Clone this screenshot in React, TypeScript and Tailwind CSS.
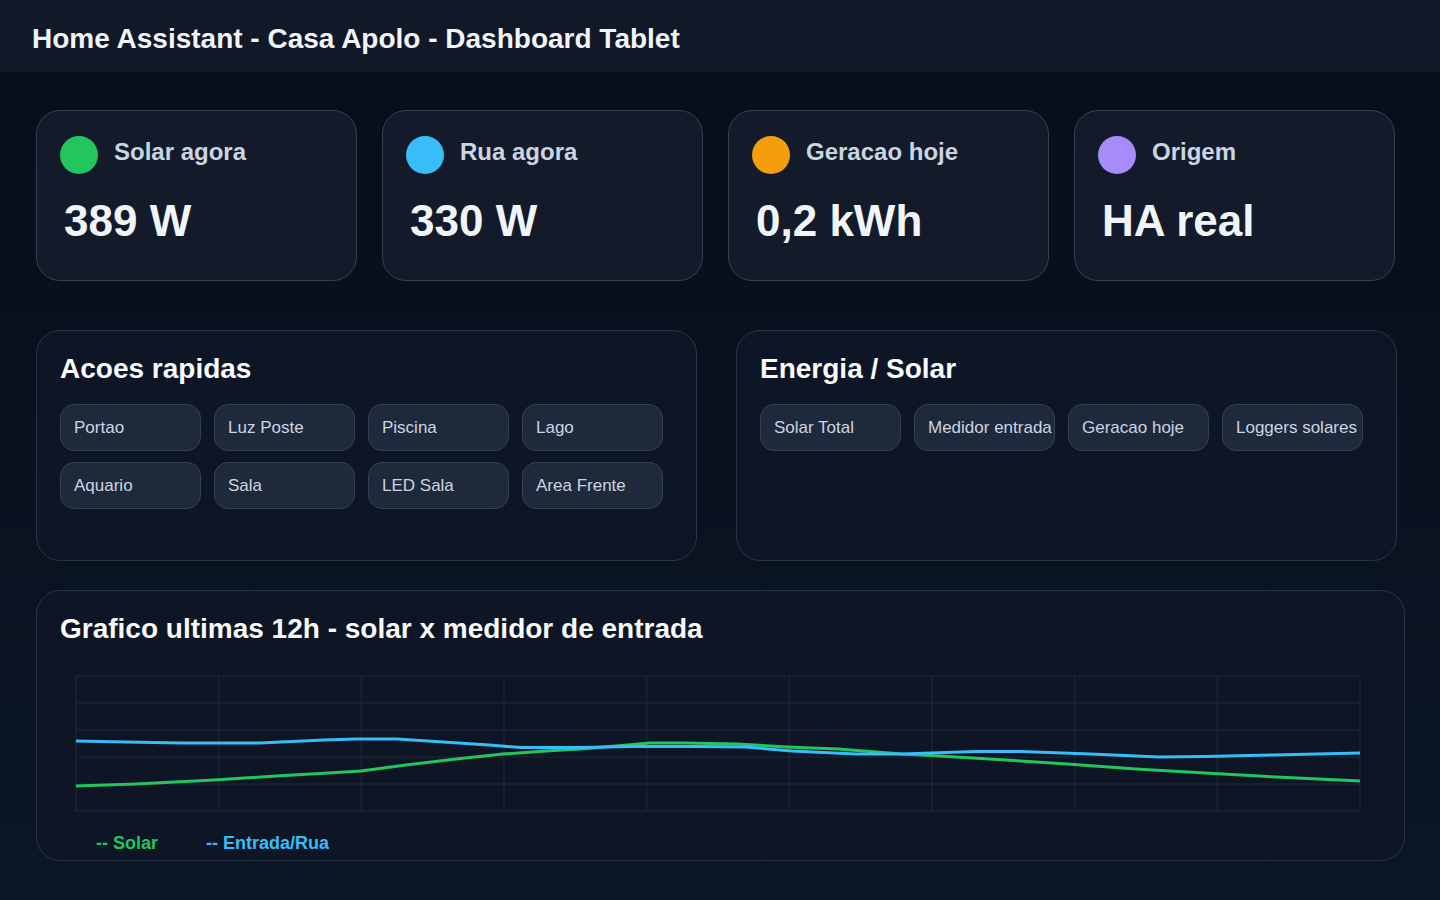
import React from "react";

type Stat = { label: string; value: string; dot: string };

const stats: Stat[] = [
  { label: "Solar agora", value: "389 W", dot: "bg-[#22c55e]" },
  { label: "Rua agora", value: "330 W", dot: "bg-[#38bdf8]" },
  { label: "Geracao hoje", value: "0,2 kWh", dot: "bg-[#f59e0b]" },
  { label: "Origem", value: "HA real", dot: "bg-[#a78bfa]" },
];

const quickActions = [
  "Portao",
  "Luz Poste",
  "Piscina",
  "Lago",
  "Aquario",
  "Sala",
  "LED Sala",
  "Area Frente",
];

const energyLinks = ["Solar Total", "Medidor entrada", "Geracao hoje", "Loggers solares"];

// series points in plot coordinates (x: 0..1284, y: 0..135)
const solar: [number, number][] = [
  [0, 110], [60, 108], [138, 104], [200, 100], [252, 97], [285, 95], [330, 89],
  [380, 83], [427, 78], [470, 75], [505, 73], [540, 70], [574, 67], [610, 67],
  [661, 68], [711, 71], [762, 73], [826, 78], [863, 80], [930, 84], [991, 88],
  [1060, 93], [1129, 97], [1200, 101], [1284, 105],
];

const rua: [number, number][] = [
  [0, 65], [50, 66], [105, 67], [184, 67], [248, 64], [280, 63], [321, 63],
  [367, 66], [413, 69], [445, 71.5], [505, 71.5], [555, 70.5], [624, 70.5],
  [670, 71], [716, 75], [780, 78], [826, 78], [900, 75.5], [945, 75.5],
  [1014, 78], [1083, 81], [1129, 80.5], [1198, 79], [1284, 77],
];

const toPoints = (pts: [number, number][]) => pts.map(([x, y]) => `${x},${y}`).join(" ");

const StatCard = ({ label, value, dot }: Stat) => (
  <div className="w-[321px] h-[171px] rounded-[24px] border border-[#334155] bg-[#131b2b] px-[23px] pt-[25px]">
    <div className="flex items-start gap-[16px]">
      <span className={`w-[38px] h-[38px] rounded-full ${dot}`} />
      <p className="text-[24px] leading-[32px] font-bold text-[#cbd5e1]">{label}</p>
    </div>
    <p className="mt-[25px] pl-[4px] text-[44px] leading-[44px] font-bold text-[#f1f5f9]">{value}</p>
  </div>
);

const Pill = ({ text }: { text: string }) => (
  <button className="w-[141px] h-[47px] rounded-[14px] border border-[#334155] bg-[#1e293b] pl-[13px] text-left text-[17px] whitespace-nowrap text-[#cbd5e1]">
    {text}
  </button>
);

const Panel = ({ title, items }: { title: string; items: string[] }) => (
  <div className="w-[661px] h-[231px] rounded-[24px] border border-[#27344a] bg-[#0e1626] px-[23px] pt-[22px]">
    <h2 className="text-[28px] leading-[32px] font-bold text-[#f8fafc]">{title}</h2>
    <div className="mt-[19px] grid grid-cols-[repeat(4,141px)] gap-x-[13px] gap-y-[11px]">
      {items.map((e) => (
        <Pill key={e} text={e} />
      ))}
    </div>
  </div>
);

const Chart = () => {
  const cols = Array.from({ length: 10 }, (_, i) => (1284 / 9) * i);
  const rows = Array.from({ length: 6 }, (_, i) => 27 * i);
  return (
    <svg width="1286" height="137" viewBox="-1 -1 1286 137" className="block ml-[15px] mt-[30px]">
      {cols.map((x) => (
        <line key={`c${x}`} x1={x} y1={0} x2={x} y2={135} stroke="#1f2937" strokeWidth={1} />
      ))}
      {rows.map((y) => (
        <line key={`r${y}`} x1={0} y1={y} x2={1284} y2={y} stroke="#1f2937" strokeWidth={1} />
      ))}
      <polyline points={toPoints(solar)} fill="none" stroke="#22c55e" strokeWidth={3} strokeLinejoin="round" />
      <polyline points={toPoints(rua)} fill="none" stroke="#38bdf8" strokeWidth={3} strokeLinejoin="round" />
    </svg>
  );
};

export default function App() {
  return (
    <div
      className="min-h-[900px] w-[1440px] bg-gradient-to-b from-[#080d18] to-[#0b1726] text-white"
      style={{ fontFamily: '"Liberation Sans", Arial, sans-serif' }}
    >
      <header className="h-[72px] bg-[#111827] flex items-center px-[32px]">
        <h1 className="text-[28px] font-bold text-[#f1f5f9] pt-[6px]">
          Home Assistant - Casa Apolo - Dashboard Tablet
        </h1>
      </header>

      <main className="px-[36px] pt-[38px]">
        <div className="flex gap-[25px]">
          {stats.map((s) => (
            <StatCard key={s.label} {...s} />
          ))}
        </div>

        <div className="mt-[49px] flex gap-[39px]">
          <Panel title="Acoes rapidas" items={quickActions} />
          <Panel title="Energia / Solar" items={energyLinks} />
        </div>

        <div className="mt-[29px] w-[1369px] h-[271px] rounded-[24px] border border-[#27344a] bg-[#0e1626] px-[23px] pt-[22px]">
          <h2 className="text-[28px] leading-[32px] font-bold text-[#f8fafc]">
            Grafico ultimas 12h - solar x medidor de entrada
          </h2>
          <Chart />
          <div className="mt-[18px] pl-[36px] flex gap-[48px] text-[18px] font-bold">
            <span className="text-[#22c55e]">-- Solar</span>
            <span className="text-[#38bdf8]">-- Entrada/Rua</span>
          </div>
        </div>
      </main>
    </div>
  );
}
